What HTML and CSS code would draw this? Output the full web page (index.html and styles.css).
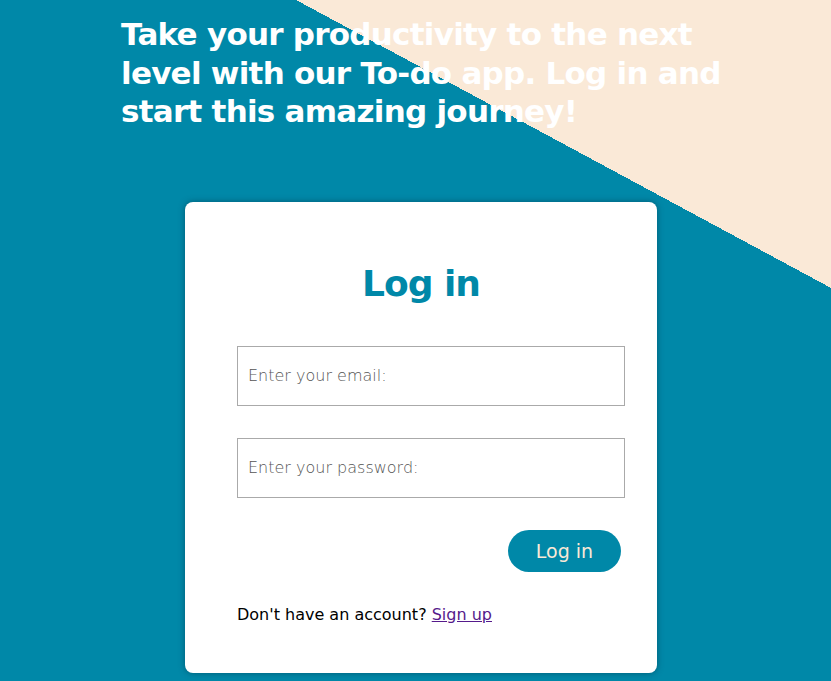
FILE: index.html
```html
<!DOCTYPE html>
<html lang="en">
<head>
<meta charset="utf-8">
<title>Log in</title>
<link rel="stylesheet" href="styles.css">
</head>
<body>
<main class="page">
  <h1 class="tagline">Take your productivity to the next<br>level with our To-do app. Log in and<br>start this amazing journey!</h1>
  <section class="card">
    <h2 class="card-title">Log in</h2>
    <form class="form">
      <input class="field" type="email" placeholder="Enter your email:">
      <input class="field" type="password" placeholder="Enter your password:">
      <div class="actions"><button class="btn" type="button">Log in</button></div>
    </form>
    <p class="signup">Don't have an account? <a class="signup-link" href="#">Sign up</a></p>
  </section>
</main>
</body>
</html>
```
FILE: styles.css
```css
html {
  height: 100%;
  background: linear-gradient(28.3deg, #0088a8 740px, #fae9d7 740px);
}
body {
  margin: 0;
  height: 100%;
  overflow: hidden;
  font-family: "DejaVu Sans", sans-serif;
}
.page {
  display: flex;
  flex-direction: column;
}
.tagline {
  margin: 15px 0 0 121px;
  color: #fff;
  font-size: 31px;
  line-height: 38.5px;
  font-weight: bold;
  letter-spacing: -0.75px;
}
.card {
  box-sizing: border-box;
  width: 472px;
  height: 471px;
  margin: 71px 0 0 185px;
  padding: 62px 0 0;
  background: #fff;
  border-radius: 8px;
  box-shadow: 0 0 6px rgba(0, 60, 80, 0.6);
}
.card-title {
  margin: 0;
  text-align: center;
  color: #0088a8;
  font-size: 36px;
  line-height: 40px;
  font-weight: bold;
  letter-spacing: -1px;
}
.form {
  display: flex;
  flex-direction: column;
  gap: 32px;
  width: 388px;
  margin: 42px 0 0 52px;
}
.field {
  box-sizing: border-box;
  width: 388px;
  height: 60px;
  margin: 0;
  padding: 0 10px;
  border: 1px solid #aaa;
  font-family: "DejaVu Sans", sans-serif;
  font-size: 16px;
  font-weight: 300;
  outline: none;
}
.field::placeholder {
  color: #555;
}
.actions {
  display: flex;
  justify-content: flex-end;
  padding-right: 4px;
}
.btn {
  width: 113px;
  height: 42px;
  border: none;
  border-radius: 21px;
  background: #0088a8;
  color: #fae9d7;
  font-family: "DejaVu Sans", sans-serif;
  font-size: 19px;
  font-weight: normal;
  padding: 0;
}
.signup {
  margin: 33px 0 0 52px;
  font-size: 16px;
  color: #000;
}
.signup-link {
  color: #551a8b;
}
```
